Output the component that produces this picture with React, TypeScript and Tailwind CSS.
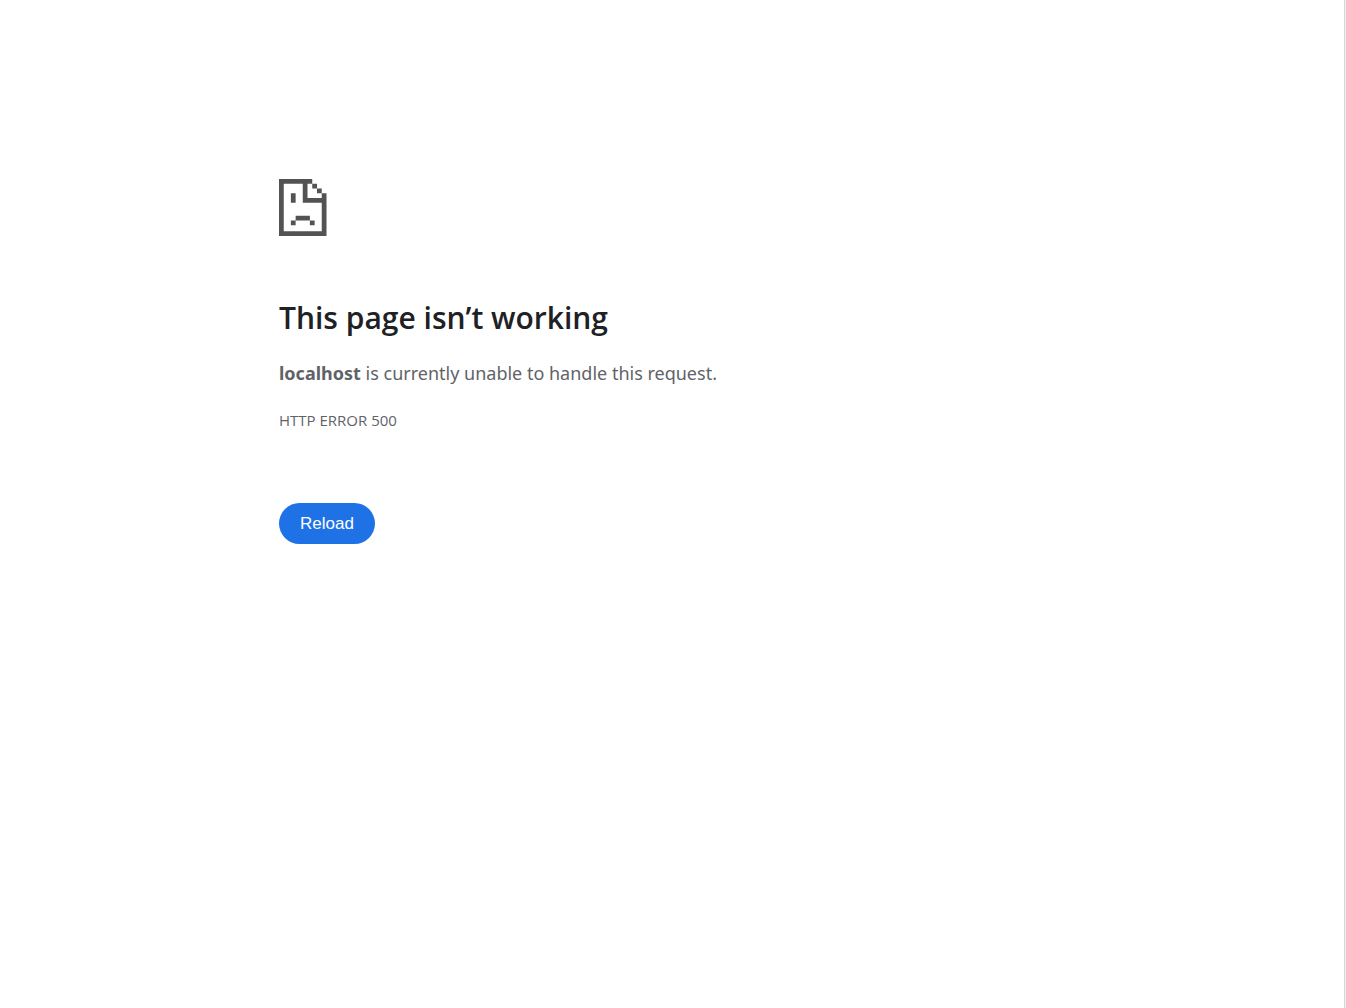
const ErrorIcon = () => (
  <svg
    className="h-[57px] w-[48px]"
    viewBox="0 0 40 48"
    preserveAspectRatio="xMinYMin meet"
    fill="#535353"
    aria-hidden="true"
  >
    <path
      fillRule="evenodd"
      d="M0 0H28V4H32V8H36V12H40V48H0ZM4 4V44H36V20H20V4ZM24 4V16H36V12H32V8H28V4Z"
    />
    <path d="M10 12H14V20H10ZM14 31H26V35H14ZM10 35H14V39H10ZM26 35H30V39H26Z" />
  </svg>
);

export default function App() {
  return (
    <div className="border-r border-[#eeeff1]">
      <div className="min-h-screen border-r border-[#d6d8dc] bg-white px-6 font-['Open_Sans','Noto_Sans',sans-serif] text-[#5f6368]">
        <main className="mx-auto flex max-w-[786px] flex-col items-start pt-[179px]">
          <ErrorIcon />
          <h1 className="mt-[62px] text-[30px] leading-10 font-semibold text-[#202124]">This page isn’t working</h1>
          <p className="mt-5 font-['Noto_Sans','Open_Sans',sans-serif] text-[18px] leading-[30px]">
            <strong className="font-bold">localhost</strong> is currently unable to handle this request.
          </p>
          <p className="mt-5 text-[15px] leading-6">HTTP ERROR 500</p>
          <button
            type="button"
            className="mt-[71px] h-[41px] rounded-full bg-[#1f72e6] px-[21px] font-['Liberation_Sans',sans-serif] text-[17px] leading-6 text-white"
          >
            Reload
          </button>
        </main>
      </div>
    </div>
  );
}
